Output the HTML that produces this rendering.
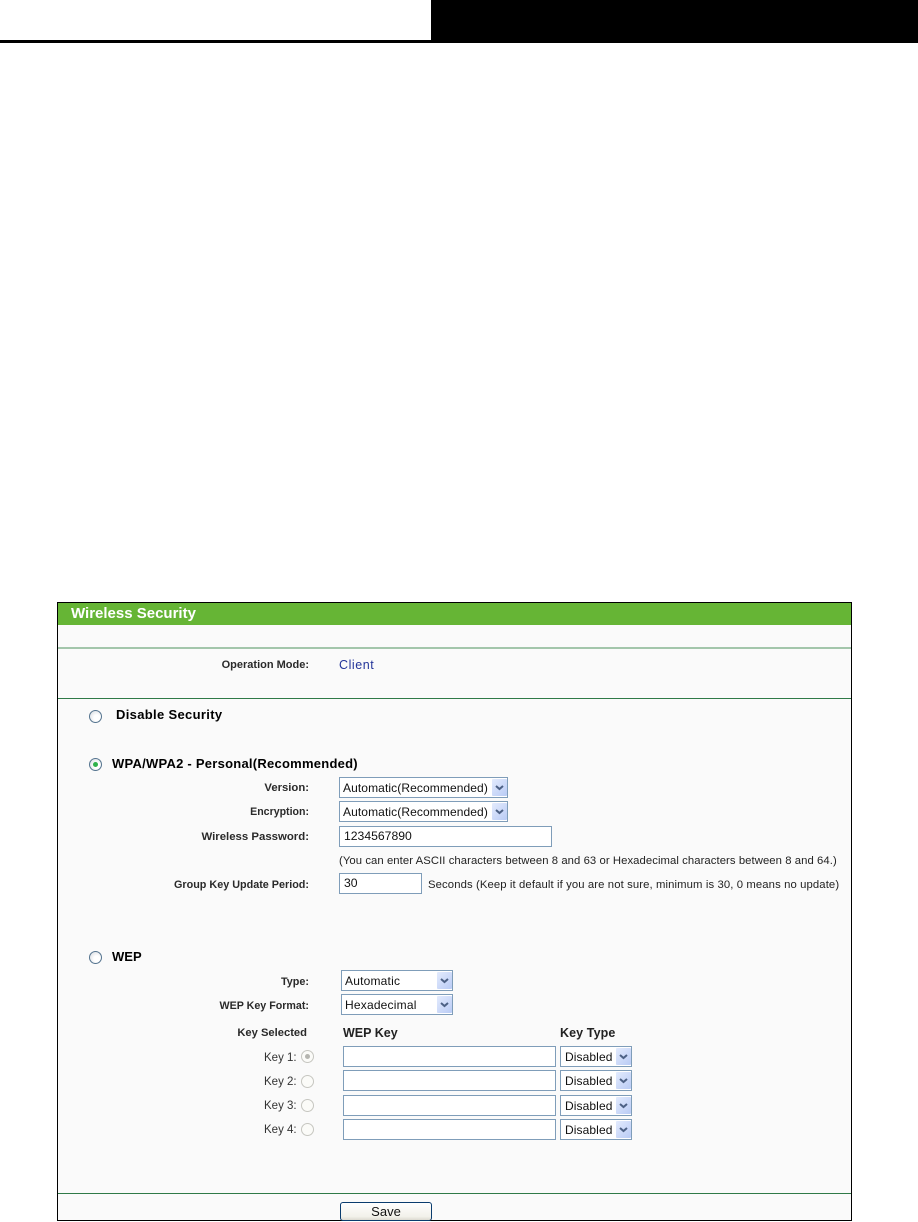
<!DOCTYPE html>
<html><head><meta charset="utf-8">
<style>
html,body{margin:0;padding:0;background:#fff;}
body{width:918px;height:1222px;position:relative;overflow:hidden;font-family:"Liberation Sans",Arial,sans-serif;color:#000;}
.a{position:absolute;}
.t{position:absolute;white-space:nowrap;font-size:12px;line-height:14px;color:#111;}
.l{position:absolute;white-space:nowrap;font-size:11px;line-height:14px;font-weight:bold;color:#2a2a2a;text-align:right;right:609px;}
.h{position:absolute;white-space:nowrap;font-size:13px;line-height:14px;font-weight:bold;color:#000;}
.box{position:absolute;box-sizing:border-box;border:1px solid #7f9db9;background:#fff;height:21px;font-size:12.2px;line-height:19px;padding-left:4px;color:#111;white-space:nowrap;}
.sel{position:absolute;box-sizing:border-box;border:1px solid #7f9db9;background:#fff;height:21px;font-size:12px;line-height:20px;padding-left:3px;color:#111;white-space:nowrap;letter-spacing:.1px;}
.sel i{position:absolute;right:0;top:1px;width:15px;height:17px;background:linear-gradient(135deg,#e3ebfd,#b9cbf5);border-radius:1px;}
.sel svg{position:absolute;right:0;top:1px;width:15px;height:17px;}
.r{position:absolute;width:13px;height:13px;box-sizing:border-box;border-radius:50%;border:1px solid #55748f;background:radial-gradient(circle at 62% 62%,#fff 30%,#d3d7dd 100%);}
.r.d{border-color:#c6c6c0;background:#fbfbf8;}
.r b{position:absolute;left:3px;top:3px;width:5px;height:5px;border-radius:50%;}
.ln{position:absolute;left:58px;width:793px;}
</style></head><body>
<div class="a" style="left:0;top:40px;width:918px;height:3px;background:#000"></div>
<div class="a" style="left:431px;top:0;width:487px;height:43px;background:#000"></div>

<div class="a" style="left:57px;top:602px;width:795px;height:619px;box-sizing:border-box;border:1px solid #000;background:#fafafa"></div>
<div class="a" style="left:58px;top:603px;width:793px;height:22px;background:#66b535"></div>
<div class="t" style="left:71px;top:605px;font-size:15px;line-height:17px;font-weight:bold;color:#fff">Wireless Security</div>
<div class="ln" style="top:647px;height:2px;background:#a3c6ab"></div>
<div class="ln" style="top:698px;height:1px;background:#2f7a47"></div>
<div class="ln" style="top:1193px;height:1px;background:#2f7a47"></div>

<div class="l" style="top:658px">Operation Mode:</div>
<div class="t" style="left:339px;top:658px;color:#24359a;font-size:12.5px;letter-spacing:.55px">Client</div>

<div class="r" style="left:89px;top:710px"></div>
<div class="h" style="left:116px;top:708px;letter-spacing:.33px">Disable Security</div>

<div class="r" style="left:89px;top:758px"><b style="background:#2fb14a"></b></div>
<div class="h" style="left:112px;top:757px;letter-spacing:.25px">WPA/WPA2 - Personal(Recommended)</div>

<div class="l" style="top:781px;font-size:11.3px">Version:</div>
<div class="sel" style="left:339px;top:777px;width:169px">Automatic(Recommended)<i></i><svg viewBox="0 0 15 17"><path d="M4 7l3.500 3 3.500-3" fill="none" stroke="#4d6185" stroke-width="2"/></svg></div>
<div class="l" style="top:805px;font-size:10.6px">Encryption:</div>
<div class="sel" style="left:339px;top:801px;width:169px">Automatic(Recommended)<i></i><svg viewBox="0 0 15 17"><path d="M4 7l3.500 3 3.500-3" fill="none" stroke="#4d6185" stroke-width="2"/></svg></div>
<div class="l" style="top:830px;font-size:11.4px">Wireless Password:</div>
<div class="box" style="left:339px;top:826px;width:213px">1234567890</div>
<div class="t" style="left:339px;top:854px;font-size:11.3px;color:#222;letter-spacing:.07px">(You can enter ASCII characters between 8 and 63 or Hexadecimal characters between 8 and 64.)</div>
<div class="l" style="top:878px;font-size:10.8px">Group Key Update Period:</div>
<div class="box" style="left:339px;top:873px;width:83px">30</div>
<div class="t" style="left:428px;top:878px;font-size:11.3px;color:#222;letter-spacing:.11px">Seconds (Keep it default if you are not sure, minimum is 30, 0 means no update)</div>

<div class="r" style="left:89px;top:951px"></div>
<div class="h" style="left:112px;top:950px">WEP</div>

<div class="l" style="top:975px;font-size:10.800px">Type:</div>
<div class="sel" style="left:341px;top:970px;width:112px;line-height:21px;letter-spacing:.2px">Automatic<i></i><svg viewBox="0 0 15 17"><path d="M4 7l3.500 3 3.500-3" fill="none" stroke="#4d6185" stroke-width="2"/></svg></div>
<div class="l" style="top:999px;font-size:10.700px">WEP Key Format:</div>
<div class="sel" style="left:341px;top:994px;width:112px;line-height:21px;letter-spacing:.2px">Hexadecimal<i></i><svg viewBox="0 0 15 17"><path d="M4 7l3.500 3 3.500-3" fill="none" stroke="#4d6185" stroke-width="2"/></svg></div>

<div class="l" style="top:1026px;right:611px;font-size:11.2px">Key Selected</div>
<div class="h" style="left:343px;top:1026px;color:#222;font-size:12.5px">WEP Key</div>
<div class="h" style="left:560px;top:1026px;color:#222;font-size:12.5px;letter-spacing:.1px">Key Type</div>

<div class="t" style="left:264px;top:1051px;font-size:11.500px;color:#333">Key 1:</div>
<div class="r d" style="left:301px;top:1050px"><b style="background:#b5b5b0"></b></div>
<div class="box" style="left:343px;top:1046px;width:213px"></div>
<div class="sel" style="left:560px;top:1046px;width:72px;line-height:21px;padding-left:4px">Disabled<i></i><svg viewBox="0 0 15 17"><path d="M4 7l3.500 3 3.500-3" fill="none" stroke="#4d6185" stroke-width="2"/></svg></div>

<div class="t" style="left:264px;top:1075px;font-size:11.500px;color:#333">Key 2:</div>
<div class="r d" style="left:301px;top:1075px"></div>
<div class="box" style="left:343px;top:1070px;width:213px"></div>
<div class="sel" style="left:560px;top:1070px;width:72px;line-height:21px;padding-left:4px">Disabled<i></i><svg viewBox="0 0 15 17"><path d="M4 7l3.500 3 3.500-3" fill="none" stroke="#4d6185" stroke-width="2"/></svg></div>

<div class="t" style="left:264px;top:1099px;font-size:11.500px;color:#333">Key 3:</div>
<div class="r d" style="left:301px;top:1099px"></div>
<div class="box" style="left:343px;top:1095px;width:213px"></div>
<div class="sel" style="left:560px;top:1095px;width:72px;line-height:21px;padding-left:4px">Disabled<i></i><svg viewBox="0 0 15 17"><path d="M4 7l3.500 3 3.500-3" fill="none" stroke="#4d6185" stroke-width="2"/></svg></div>

<div class="t" style="left:264px;top:1123px;font-size:11.500px;color:#333">Key 4:</div>
<div class="r d" style="left:301px;top:1123px"></div>
<div class="box" style="left:343px;top:1119px;width:213px"></div>
<div class="sel" style="left:560px;top:1119px;width:72px;line-height:21px;padding-left:4px">Disabled<i></i><svg viewBox="0 0 15 17"><path d="M4 7l3.500 3 3.500-3" fill="none" stroke="#4d6185" stroke-width="2"/></svg></div>

<div class="a" style="left:340px;top:1202px;width:92px;height:19px;box-sizing:border-box;border:1px solid #0a3c6e;border-radius:3px;background:linear-gradient(#ffffff,#f2f1ea 80%,#dcdad0);font-size:13px;line-height:17px;text-align:center;color:#111">Save</div>
</body></html>
